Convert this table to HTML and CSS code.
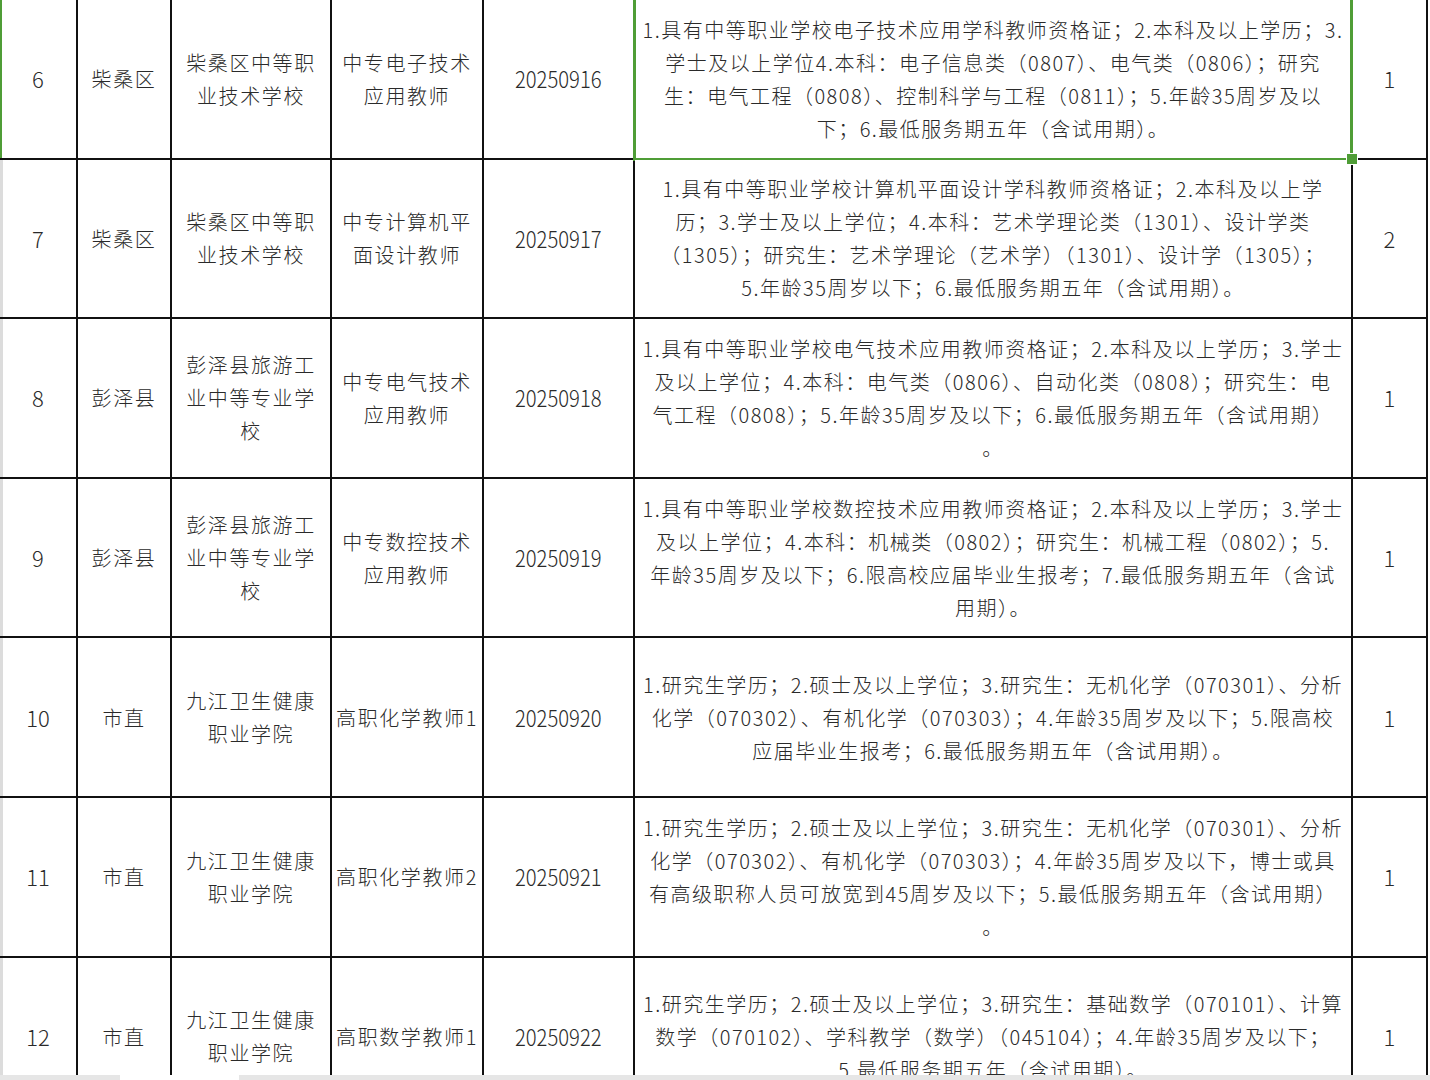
FILE: index.html
```html
<!DOCTYPE html>
<html lang="zh-CN">
<head>
<meta charset="utf-8">
<title>招聘岗位表</title>
<link rel="stylesheet" href="styles.css">
</head>
<body>
<div class="sheet">
  <div class="cell c-no first sel-row">6</div>
  <div class="cell">柴桑区</div>
  <div class="cell">柴桑区中等职<br>业技术学校</div>
  <div class="cell">中专电子技术<br>应用教师</div>
  <div class="cell num"><span class="n">20250916</span></div>
  <div class="cell req selected">1.具有中等职业学校电子技术应用学科教师资格证；2.本科及以上学历；3.<br>学士及以上学位4.本科：电子信息类（0807）、电气类（0806）；研究<br>生：电气工程（0808）、控制科学与工程（0811）；5.年龄35周岁及以<br>下；6.最低服务期五年（含试用期）。</div>
  <div class="cell num">1</div>

  <div class="cell c-no first">7</div>
  <div class="cell">柴桑区</div>
  <div class="cell">柴桑区中等职<br>业技术学校</div>
  <div class="cell">中专计算机平<br>面设计教师</div>
  <div class="cell num"><span class="n">20250917</span></div>
  <div class="cell req">1.具有中等职业学校计算机平面设计学科教师资格证；2.本科及以上学<br>历；3.学士及以上学位；4.本科：艺术学理论类（1301）、设计学类<br>（1305）；研究生：艺术学理论（艺术学）（1301）、设计学（1305）；<br>5.年龄35周岁以下；6.最低服务期五年（含试用期）。</div>
  <div class="cell num">2</div>

  <div class="cell c-no first">8</div>
  <div class="cell">彭泽县</div>
  <div class="cell">彭泽县旅游工<br>业中等专业学<br>校</div>
  <div class="cell">中专电气技术<br>应用教师</div>
  <div class="cell num"><span class="n">20250918</span></div>
  <div class="cell req">1.具有中等职业学校电气技术应用教师资格证；2.本科及以上学历；3.学士<br>及以上学位；4.本科：电气类（0806）、自动化类（0808）；研究生：电<br>气工程（0808）；5.年龄35周岁及以下；6.最低服务期五年（含试用期）<br>。</div>
  <div class="cell num">1</div>

  <div class="cell c-no first">9</div>
  <div class="cell">彭泽县</div>
  <div class="cell">彭泽县旅游工<br>业中等专业学<br>校</div>
  <div class="cell">中专数控技术<br>应用教师</div>
  <div class="cell num"><span class="n">20250919</span></div>
  <div class="cell req">1.具有中等职业学校数控技术应用教师资格证；2.本科及以上学历；3.学士<br>及以上学位；4.本科：机械类（0802）；研究生：机械工程（0802）；5.<br>年龄35周岁及以下；6.限高校应届毕业生报考；7.最低服务期五年（含试<br>用期）。</div>
  <div class="cell num">1</div>

  <div class="cell c-no first">10</div>
  <div class="cell">市直</div>
  <div class="cell">九江卫生健康<br>职业学院</div>
  <div class="cell">高职化学教师1</div>
  <div class="cell num"><span class="n">20250920</span></div>
  <div class="cell req">1.研究生学历；2.硕士及以上学位；3.研究生：无机化学（070301）、分析<br>化学（070302）、有机化学（070303）；4.年龄35周岁及以下；5.限高校<br>应届毕业生报考；6.最低服务期五年（含试用期）。</div>
  <div class="cell num">1</div>

  <div class="cell c-no first">11</div>
  <div class="cell">市直</div>
  <div class="cell">九江卫生健康<br>职业学院</div>
  <div class="cell">高职化学教师2</div>
  <div class="cell num"><span class="n">20250921</span></div>
  <div class="cell req">1.研究生学历；2.硕士及以上学位；3.研究生：无机化学（070301）、分析<br>化学（070302）、有机化学（070303）；4.年龄35周岁及以下，博士或具<br>有高级职称人员可放宽到45周岁及以下；5.最低服务期五年（含试用期）<br>。</div>
  <div class="cell num">1</div>

  <div class="cell c-no first">12</div>
  <div class="cell">市直</div>
  <div class="cell">九江卫生健康<br>职业学院</div>
  <div class="cell">高职数学教师1</div>
  <div class="cell num"><span class="n">20250922</span></div>
  <div class="cell req">1.研究生学历；2.硕士及以上学位；3.研究生：基础数学（070101）、计算<br>数学（070102）、学科教学（数学）（045104）；4.年龄35周岁及以下；<br>5.最低服务期五年（含试用期）。</div>
  <div class="cell num">1</div>
</div>
<div class="tabbar">
  <div class="tab-seg left"></div>
  <div class="tab-gap"></div>
  <div class="tab-seg right"></div>
</div>
</body>
</html>
```

FILE: styles.css
```css
html, body {
  margin: 0;
  padding: 0;
  background: #ffffff;
}

body {
  width: 1430px;
  height: 1080px;
  overflow: hidden;
  position: relative;
}

.sheet {
  display: grid;
  grid-template-columns: 76px 92px 158px 150px 149px 716px 73px;
  grid-auto-rows: 157.6px;
  gap: 2px;
  background: #111111;
  width: 1426px;
  padding: 0 2px 2px 0;
  margin-top: -2px;
  border-top: 2px solid #111111;
  font-family: "Liberation Sans Narrow", "Noto Sans CJK SC", sans-serif;
  font-weight: 300;
  font-size: 20px;
  letter-spacing: 1.6px;
  line-height: 33px;
  color: #2a2a2a;
}

.cell {
  background: #ffffff;
  display: flex;
  align-items: center;
  justify-content: center;
  text-align: center;
  white-space: nowrap;
  overflow: visible;
  position: relative;
}

.num {
  font-size: 22px;
  letter-spacing: 0;
}

.n {
  display: inline-block;
  font-size: 23px;
  transform: scaleX(0.88);
}

.c-no {
  font-size: 22px;
  letter-spacing: 0;
}

.req {
  letter-spacing: 1.5px;
}

.first {
  box-shadow: inset 3px 0 0 #dcdcdc;
}

.first.sel-row {
  box-shadow: inset 2px 0 0 #4f9d36;
}

.selected::after {
  content: "";
  position: absolute;
  left: -2px;
  right: -2px;
  top: -3px;
  bottom: -3px;
  border: 3px solid #4f9d36;
  pointer-events: none;
}

.selected::before {
  content: "";
  position: absolute;
  right: -7px;
  bottom: -7px;
  width: 10px;
  height: 10px;
  background: #4f9d36;
  border: 1px solid #ffffff;
  z-index: 2;
}

.tabbar {
  position: absolute;
  left: 0;
  right: 0;
  bottom: 0;
  height: 5px;
  display: flex;
}

.tab-seg {
  background: #e6e6e6;
}

.tab-seg.left {
  width: 120px;
}

.tab-gap {
  width: 119px;
  background: #ffffff;
}

.tab-seg.right {
  flex: 1;
}
```
